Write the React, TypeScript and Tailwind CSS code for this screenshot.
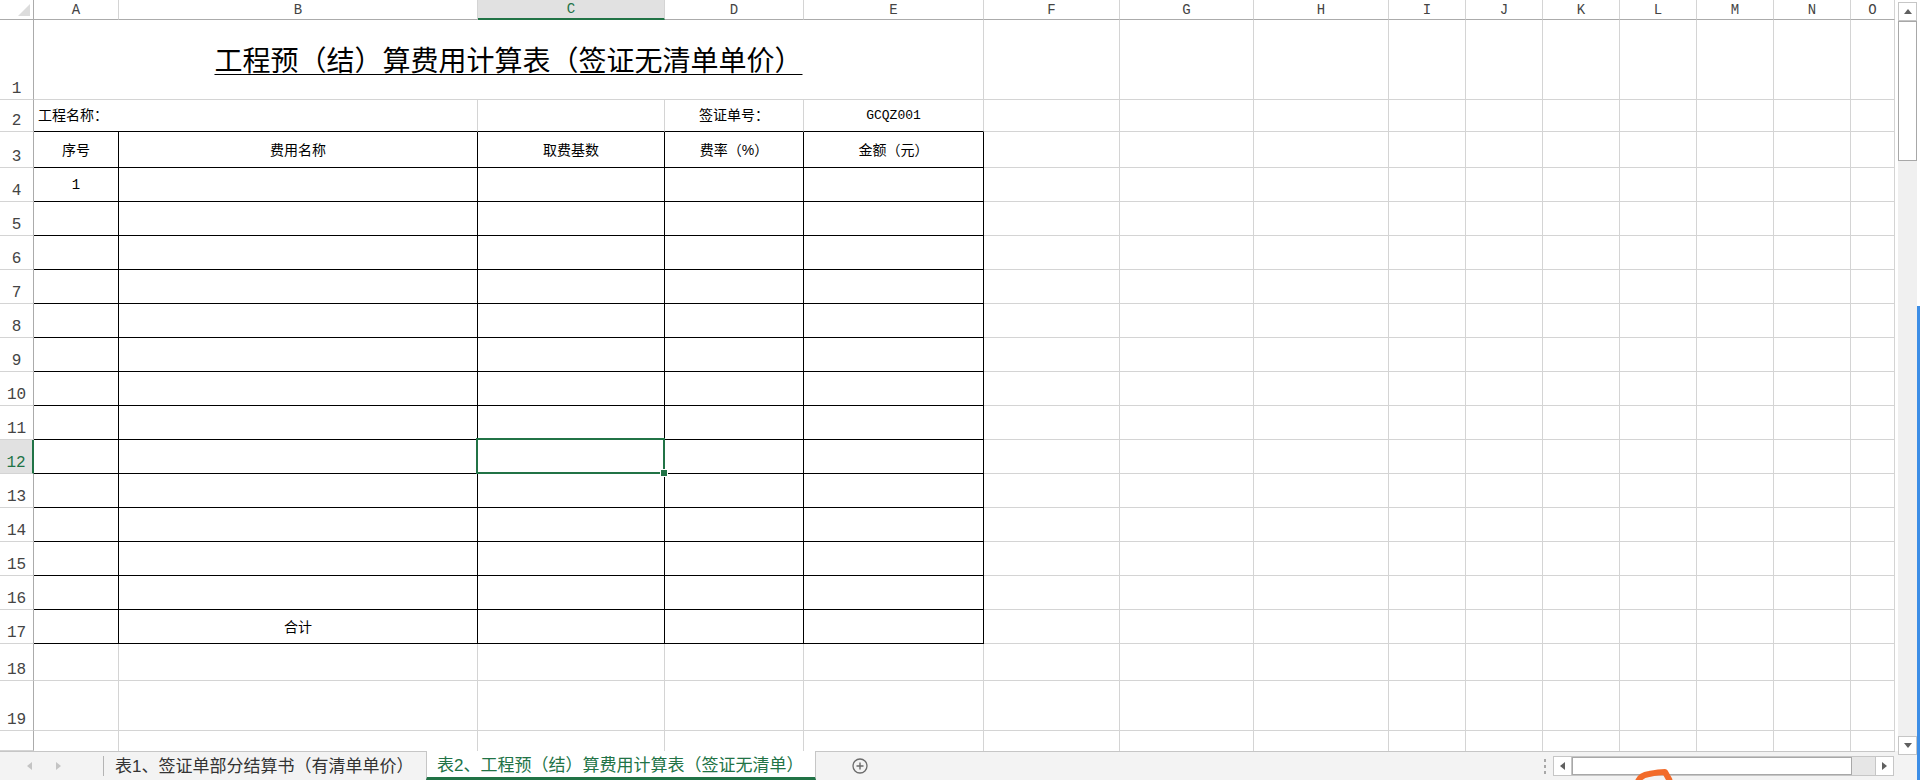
import React from 'react';

const COLS = ['A', 'B', 'C', 'D', 'E', 'F', 'G', 'H', 'I', 'J', 'K', 'L', 'M', 'N', 'O'];
const ROWS = Array.from({ length: 20 }, (_, i) => i + 1);

// which edges of a cell are drawn black (table frame)
function edgeCls(row: number, col: number, span = 1) {
  const last = col + span - 1;
  const inTable = last <= 4;
  const r = inTable && row >= 3 && row <= 17 ? 'border-r-black' : 'border-r-[#d4d4d4]';
  const b = inTable && row >= 2 && row <= 17 ? 'border-b-black' : 'border-b-[#d4d4d4]';
  return `border-r border-b ${r} ${b}`;
}

function Cell({ row, col, span = 1, children, className = '' }: { row: number; col: number; span?: number; children?: React.ReactNode; className?: string }) {
  const spanCls = span === 5 ? 'col-span-5' : span === 2 ? 'col-span-2' : '';
  return (
    <div className={`relative flex items-center overflow-visible ${spanCls} ${edgeCls(row, col, span)} ${row === 20 ? 'border-b-0' : ''} ${className}`}>
      {children}
    </div>
  );
}

function RowHeader({ n }: { n: number }) {
  const active = n === 12;
  return (
    <div
      className={`flex items-end justify-center overflow-hidden border-b border-b-[#d4d4d4] font-['Liberation_Mono',monospace] text-[16px] leading-[18px] ${
        active ? 'bg-[#e1e1e1] text-[#217346] border-r-2 border-r-[#217346]' : 'bg-white text-[#444] border-r border-r-[#ababab]'
      }`}
    >
      {n === 20 ? '' : <span className="pb-[1px]">{n}</span>}
    </div>
  );
}

function SheetRow({ n }: { n: number }) {
  const cells: React.ReactNode[] = [<RowHeader key="h" n={n} />];
  if (n === 1) {
    cells.push(
      <Cell key="a" row={n} col={0} span={5} className="justify-center">
        <span className="mt-[5px] text-[28px] leading-[30px] text-black underline decoration-1 underline-offset-[3px]">
          工程预（结）算费用计算表（签证无清单单价）
        </span>
      </Cell>
    );
    for (let c = 5; c < 15; c++) cells.push(<Cell key={c} row={n} col={c} />);
  } else if (n === 2) {
    cells.push(
      <Cell key="a" row={n} col={0} span={2} className="pl-[4px]">
        <span className="text-[14px] text-black">工程名称：</span>
      </Cell>
    );
    for (let c = 2; c < 15; c++) {
      let content: React.ReactNode = null;
      if (c === 3) content = <span className="text-[14px] text-black">签证单号：</span>;
      if (c === 4) content = <span className="font-['Liberation_Mono',monospace] text-[13px] text-black">GCQZ001</span>;
      cells.push(
        <Cell key={c} row={n} col={c} className="justify-center">
          {content}
        </Cell>
      );
    }
  } else {
    const labels: Record<string, string> = {};
    if (n === 3) {
      labels['0'] = '序号';
      labels['1'] = '费用名称';
      labels['2'] = '取费基数';
      labels['3'] = '费率（%）';
      labels['4'] = '金额（元）';
    }
    if (n === 4) labels['0'] = '1';
    if (n === 17) labels['1'] = '合计';
    for (let c = 0; c < 15; c++) {
      const t = labels[String(c)];
      const selected = n === 12 && c === 2;
      cells.push(
        <Cell key={c} row={n} col={c} className="justify-center">
          {t && (
            <span className={`text-[14px] text-black pt-[2px] ${t === '1' ? "font-['Liberation_Mono',monospace]" : ''}`}>{t}</span>
          )}
          {selected && (
            <div className="absolute -left-[2px] -top-[2px] -right-[1px] -bottom-[1px] z-10 border-2 border-[#217346]">
              <div className="absolute -right-[4px] -bottom-[4px] h-[6px] w-[6px] bg-[#217346] outline outline-1 outline-white" />
            </div>
          )}
        </Cell>
      );
    }
  }
  return <>{cells}</>;
}

function Tri({ dir, className = '' }: { dir: 'up' | 'down' | 'left' | 'right'; className?: string }) {
  const pts = {
    up: '0,6 4,1 8,6',
    down: '0,1 4,6 8,1',
    left: '6,0 1,4 6,8',
    right: '1,0 6,4 1,8',
  }[dir];
  const size = dir === 'up' || dir === 'down' ? 'w-[8px] h-[7px]' : 'w-[7px] h-[8px]';
  return (
    <svg viewBox={dir === 'up' || dir === 'down' ? '0 0 8 7' : '0 0 7 8'} className={`${size} ${className}`}>
      <polygon points={pts} fill="currentColor" />
    </svg>
  );
}

export default function App() {
  return (
    <div className="relative flex h-[780px] w-[1920px] overflow-hidden bg-white font-['Liberation_Sans','Noto_Sans_CJK_SC',sans-serif] [text-spacing-trim:space-all]">
      {/* left: sheet + tab bar */}
      <div className="flex w-[1895px] flex-col">
        <div className="grid h-[751px] grid-cols-[34px_85px_359px_187px_139px_180px_136px_134px_135px_77px_77px_77px_77px_77px_77px_44px] grid-rows-[20px_80px_32px_36px_repeat(14,34px)_37px_50px_20px] overflow-hidden">
          {/* corner */}
          <div className="relative border-r border-b border-r-[#ababab] border-b-[#ababab] bg-white">
            <svg viewBox="0 0 12 12" className="absolute right-[3px] bottom-[3px] h-[12px] w-[12px]">
              <polygon points="12,0 12,12 0,12" fill="#dcdcdc" />
            </svg>
          </div>
          {COLS.map((c) => {
            const active = c === 'C';
            return (
              <div
                key={c}
                className={`flex items-center justify-center overflow-hidden border-r border-r-[#d4d4d4] font-['Liberation_Mono',monospace] text-[14px] leading-none ${
                  active ? 'bg-[#e1e1e1] text-[#217346] border-b-2 border-b-[#217346]' : 'bg-white text-[#444] border-b border-b-[#ababab]'
                }`}
              >
                {c}
              </div>
            );
          })}
          {ROWS.map((n) => (
            <SheetRow key={n} n={n} />
          ))}
        </div>

        {/* tab bar */}
        <div className="flex h-[29px] items-stretch border-t border-[#c6c6c6] bg-[#f3f3f3] text-[17px]">
          <div className="flex w-[103px] items-center">
            <Tri dir="left" className="ml-[26px] text-[#c4c4c4]" />
            <Tri dir="right" className="ml-[22px] text-[#c4c4c4]" />
          </div>
          <div className="my-[4px] w-px bg-[#b4b4b4]" />
          <div className="flex w-[322px] items-center whitespace-nowrap pl-[11px] text-[#333] leading-none">表1、签证单部分结算书（有清单单价）</div>
          <div className="-mt-px flex w-[390px] items-center whitespace-nowrap border-x border-[#c6c6c6] border-b-[3px] border-b-[#217346] bg-white pl-[10px] pt-[2px] leading-none text-[#217346]">
            表2、工程预（结）算费用计算表（签证无清单）
          </div>
          <div className="flex w-[88px] items-center justify-center">
            <svg viewBox="0 0 16 16" className="h-[16px] w-[16px]">
              <circle cx="8" cy="8" r="7" fill="none" stroke="#6b6b6b" strokeWidth="1.3" />
              <path d="M8 4.5v7M4.5 8h7" stroke="#6b6b6b" strokeWidth="1.4" />
            </svg>
          </div>
          <div className="flex-1" />
          <div className="flex w-[17px] flex-col items-center justify-center gap-[3px]">
            <span className="h-[3px] w-[2px] bg-[#a8a8a8]" />
            <span className="h-[3px] w-[2px] bg-[#a8a8a8]" />
            <span className="h-[3px] w-[2px] bg-[#a8a8a8]" />
          </div>
          {/* horizontal scrollbar */}
          <div className="my-[4px] flex w-[341px] border border-[#c6c6c6] bg-white">
            <div className="flex w-[18px] items-center justify-center border-r border-[#c6c6c6]">
              <Tri dir="left" className="text-[#606060]" />
            </div>
            <div className="w-[280px] border border-[#a8a8a8] bg-white" />
            <div className="w-[23px] bg-[#e6e6e6]" />
            <div className="flex flex-1 items-center justify-center border-l border-[#c6c6c6]">
              <Tri dir="right" className="text-[#606060]" />
            </div>
          </div>
          <div className="w-[1px]" />
        </div>
      </div>

      {/* right: vertical scrollbar */}
      <div className="flex w-[25px]">
        <div className="w-[3px]">
          <div className="h-[751px] bg-white" />
          <div className="h-[29px] bg-[#f3f3f3]" />
        </div>
        <div className="flex w-[19px] flex-col bg-[#f0f0f0]">
          <div className="h-[2px] bg-white" />
          <div className="flex h-[19px] items-center justify-center border border-[#c6c6c6] bg-white">
            <Tri dir="up" className="text-[#606060]" />
          </div>
          <div className="h-[140px] border border-[#a8a8a8] bg-white" />
          <div className="flex-1" />
          <div className="flex h-[19px] items-center justify-center border border-[#c6c6c6] bg-white">
            <Tri dir="down" className="text-[#606060]" />
          </div>
          <div className="h-[25px] bg-[#f3f3f3]" />
        </div>
        <div className="flex w-[3px] flex-col">
          <div className="h-[306px] bg-white" />
          <div className="flex-1 bg-[#3d8ee6]" />
        </div>
      </div>

      {/* stray pen stroke over the status area */}
      <svg viewBox="0 0 40 14" className="absolute left-[1635px] top-[767px] h-[14px] w-[40px]">
        <path d="M3 14 Q6 8 14 7 Q24 5 30 5 L35 14" fill="none" stroke="#f26b2a" strokeWidth="6" strokeLinejoin="round" />
      </svg>
    </div>
  );
}
